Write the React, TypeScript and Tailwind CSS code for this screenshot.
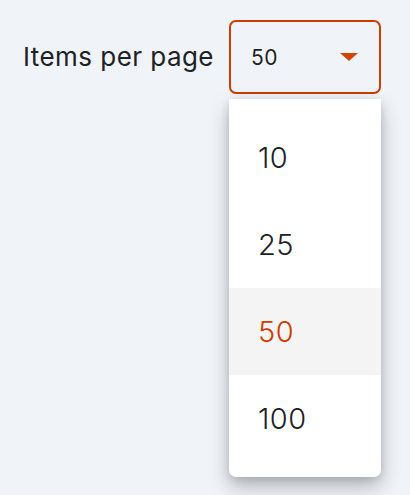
import React from "react";

export default function App() {
  const items = ["10", "25", "50", "100"];
  return (
    <div
      className="w-[410px] h-[495px] bg-[#f0f4f9] overflow-hidden"
      style={{ fontFamily: "Inter, 'Noto Sans', sans-serif" }}
    >
      <div className="flex items-center pl-[23px] pt-[20px] gap-[15px]">
        <span className="text-[26px] text-[#202124] leading-none tracking-[0.45px]">Items per page</span>
        <div className="relative">
          <div className="w-[152px] h-[74px] border-2 border-[#cc3d00] rounded-[7px] flex items-center justify-between pl-[20px] pr-[21px]">
            <span className="text-[21px] text-[#1f1f1f] leading-none tracking-[0.5px]">50</span>
            <svg width="18" height="8" viewBox="0 0 18 8">
              <path d="M0 0 L18 0 L9 8 Z" fill="#d2450d" />
            </svg>
          </div>
          <div className="absolute left-0 top-[79px] w-[152px] bg-white rounded-b-[7px] py-[15px] shadow-[0_10px_20px_rgba(0,0,0,0.25),0_2px_8px_rgba(0,0,0,0.12)] z-10">
            {items.map((it) => (
              <div
                key={it}
                className={
                  "h-[87px] flex items-center pl-[29px] text-[29px] font-light tracking-[0.5px] " +
                  (it === "50" ? "bg-[#f4f4f4] text-[#cc3d00]" : "text-[#202124]")
                }
              >
                {it}
              </div>
            ))}
          </div>
        </div>
      </div>
    </div>
  );
}
